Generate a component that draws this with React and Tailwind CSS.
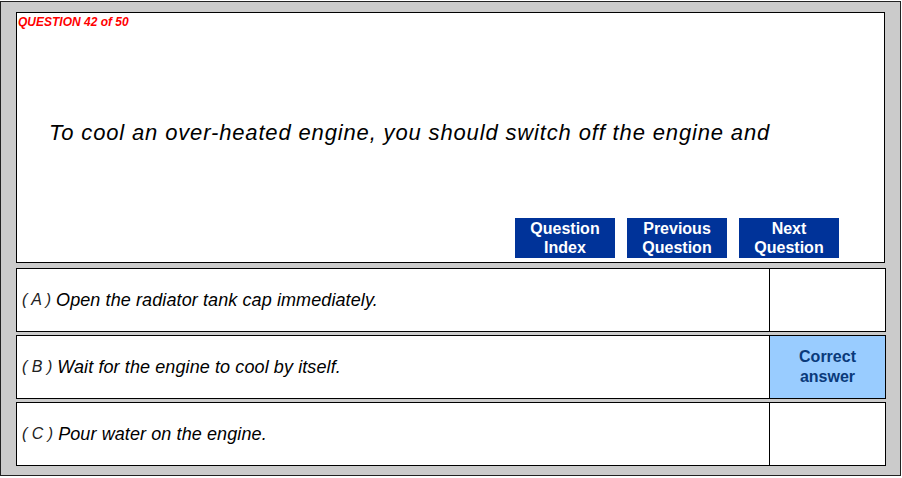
export default function App() {
  const rows = [
    { l: "A", t: "Open the radiator tank cap immediately.", c: false },
    { l: "B", t: "Wait for the engine to cool by itself.", c: true },
    { l: "C", t: "Pour water on the engine.", c: false },
  ];
  const btns = [
    ["Question", "Index"],
    ["Previous", "Question"],
    ["Next", "Question"],
  ];
  return (
    <div
      className="mt-px h-[475px] w-[901px] border border-[#222] bg-[#cbcbcb] px-[15px] pt-[10px] text-black"
      style={{ fontFamily: '"Liberation Sans", Arial, sans-serif' }}
    >
      <div className="flex h-[251px] w-[869px] flex-col border border-black bg-white">
        <div className="mt-px h-[16px] pl-px text-[12px] font-bold italic leading-[16px] text-[#ff0000]">
          QUESTION 42 of 50
        </div>
        <p className="mt-[91px] pl-[32px] text-[22px] italic leading-[24px] tracking-[0.85px]">
          To cool an over-heated engine, you should switch off the engine and
        </p>
        <div className="mt-auto mb-[4px] flex justify-end gap-[12px] pr-[45px]">
          {btns.map((b, i) => (
            <div
              key={i}
              className="flex h-[40px] w-[100px] flex-col items-center justify-center bg-[#003399] text-[16px] font-bold leading-[19px] text-white"
            >
              <span>{b[0]}</span>
              <span>{b[1]}</span>
            </div>
          ))}
        </div>
      </div>
      <div className="mt-[5px] flex flex-col gap-[3px]">
        {rows.map((r) => (
          <div key={r.l} className="flex h-[64px] w-[870px] border border-black bg-white">
            <div className="flex flex-1 items-center pl-[5px] text-[18px] italic">
              <span className="mr-[5px] text-[16px] font-light text-[#222]">( {r.l} )</span>
              <span className="tracking-[0.1px]">{r.t}</span>
            </div>
            <div
              className={
                "flex w-[116px] flex-col items-center justify-center border-l border-black text-[16px] font-bold leading-[20px] text-[#0a3a7a] " +
                (r.c ? "bg-[#99ccff]" : "bg-white")
              }
            >
              {r.c && (
                <>
                  <span>Correct</span>
                  <span>answer</span>
                </>
              )}
            </div>
          </div>
        ))}
      </div>
    </div>
  );
}
